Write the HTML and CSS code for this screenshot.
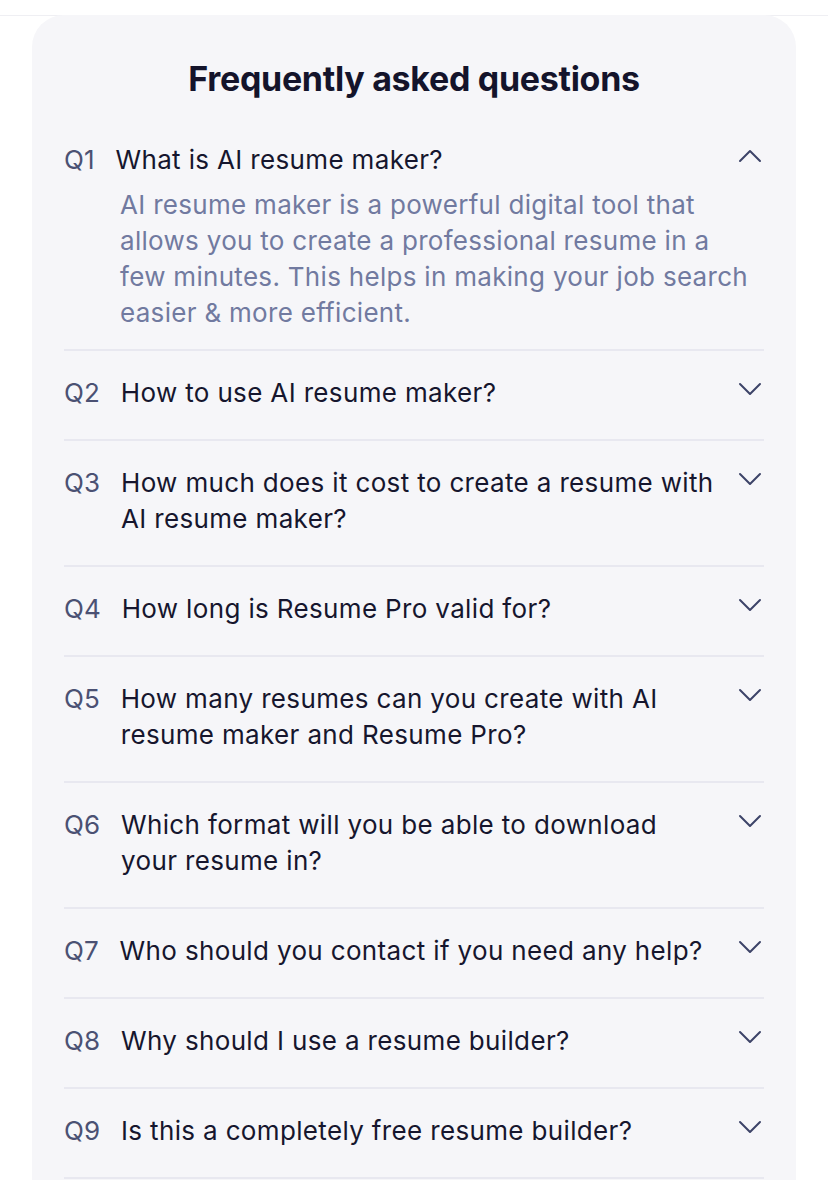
FILE: index.html
```html
<!DOCTYPE html>
<html lang="en">
<head>
<meta charset="utf-8">
<title>FAQ</title>
<link rel="stylesheet" href="styles.css">
</head>
<body>
<div class="topbar"></div>
<section class="card">
  <h2 class="title">Frequently asked questions</h2>
  <div class="faq">
    <div class="item open">
      <div class="row">
        <span class="qn">Q1</span>
        <span class="qt">What is AI resume maker?</span>
        <svg class="chev" viewBox="0 0 24 28" width="24" height="28"><path d="M2 19 L12 9 L22 19"/></svg>
      </div>
      <p class="answer">AI resume maker is a powerful digital tool that allows you to create a professional resume in a few minutes. This helps in making your job search easier &amp; more efficient.</p>
    </div>
    <div class="item">
      <div class="row">
        <span class="qn">Q2</span>
        <span class="qt">How to use AI resume maker?</span>
        <svg class="chev" viewBox="0 0 24 28" width="24" height="28"><path d="M2 9 L12 19 L22 9"/></svg>
      </div>
    </div>
    <div class="item">
      <div class="row">
        <span class="qn">Q3</span>
        <span class="qt">How much does it cost to create a resume with AI resume maker?</span>
        <svg class="chev" viewBox="0 0 24 28" width="24" height="28"><path d="M2 9 L12 19 L22 9"/></svg>
      </div>
    </div>
    <div class="item">
      <div class="row">
        <span class="qn">Q4</span>
        <span class="qt">How long is Resume Pro valid for?</span>
        <svg class="chev" viewBox="0 0 24 28" width="24" height="28"><path d="M2 9 L12 19 L22 9"/></svg>
      </div>
    </div>
    <div class="item">
      <div class="row">
        <span class="qn">Q5</span>
        <span class="qt">How many resumes can you create with AI resume maker and Resume Pro?</span>
        <svg class="chev" viewBox="0 0 24 28" width="24" height="28"><path d="M2 9 L12 19 L22 9"/></svg>
      </div>
    </div>
    <div class="item">
      <div class="row">
        <span class="qn">Q6</span>
        <span class="qt">Which format will you be able to download your resume in?</span>
        <svg class="chev" viewBox="0 0 24 28" width="24" height="28"><path d="M2 9 L12 19 L22 9"/></svg>
      </div>
    </div>
    <div class="item">
      <div class="row">
        <span class="qn">Q7</span>
        <span class="qt">Who should you contact if you need any help?</span>
        <svg class="chev" viewBox="0 0 24 28" width="24" height="28"><path d="M2 9 L12 19 L22 9"/></svg>
      </div>
    </div>
    <div class="item">
      <div class="row">
        <span class="qn">Q8</span>
        <span class="qt">Why should I use a resume builder?</span>
        <svg class="chev" viewBox="0 0 24 28" width="24" height="28"><path d="M2 9 L12 19 L22 9"/></svg>
      </div>
    </div>
    <div class="item">
      <div class="row">
        <span class="qn">Q9</span>
        <span class="qt">Is this a completely free resume builder?</span>
        <svg class="chev" viewBox="0 0 24 28" width="24" height="28"><path d="M2 9 L12 19 L22 9"/></svg>
      </div>
    </div>
  </div>
</section>
</body>
</html>
```
FILE: styles.css
```css
* { box-sizing: border-box; }
html, body { margin: 0; padding: 0; background: #ffffff; }
body {
  font-family: "Inter", "Liberation Sans", sans-serif;
  color: #16162e;
  overflow: hidden;
}
.topbar {
  height: 16px;
  border-bottom: 1px solid #efeff3;
}
.card {
  margin: -1px 32px 0;
  background: #f6f6f9;
  border-radius: 32px 32px 0 0;
  padding: 44px 32px 0;
  min-height: 1200px;
}
.title {
  margin: 0 0 19px;
  text-align: center;
  font-size: 34px;
  line-height: 40px;
  font-weight: 700;
  color: #14142b;
  letter-spacing: -0.3px;
}
.faq { display: flex; flex-direction: column; }
.item {
  padding: 24px 0 28px;
  border-bottom: 2px solid #e8e8f0;
}
.item.open { padding-bottom: 18px; }
.row {
  display: flex;
  align-items: flex-start;
  gap: 21px;
}
.qn {
  font-size: 26px;
  line-height: 36px;
  color: #4b5173;
  flex: none;
}
.qt {
  flex: 1;
  font-size: 26px;
  line-height: 36px;
  letter-spacing: 0.35px;
  color: #16162e;
}
.chev {
  flex: none;
  margin-left: 1px;
  margin-right: 2px;
  fill: none;
  stroke: #3d4468;
  stroke-width: 2;
  stroke-linecap: round;
  stroke-linejoin: round;
}
.answer {
  margin: 9px 0 0;
  padding-left: 56px;
  padding-right: 14px;
  font-size: 26px;
  line-height: 36px;
  letter-spacing: 0.3px;
  color: #717aa0;
}
```
